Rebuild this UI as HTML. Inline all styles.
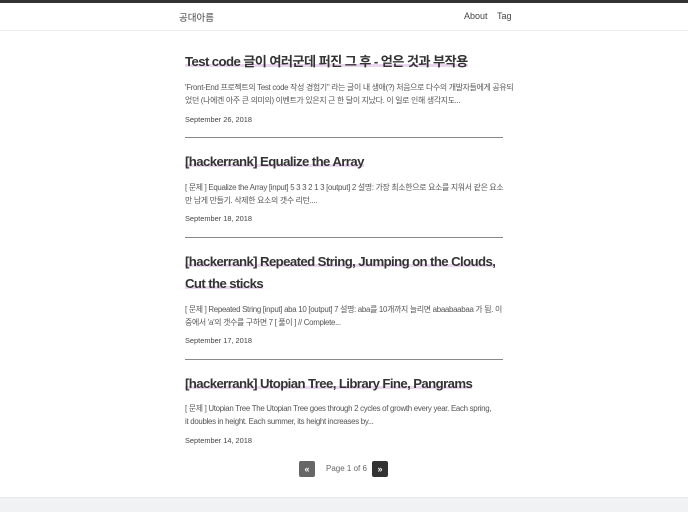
<!DOCTYPE html>
<html><head><meta charset="utf-8"><style>
*{margin:0;padding:0;box-sizing:border-box}
body{width:688px;height:512px;overflow:hidden;background:#fff;position:relative;font-family:"Liberation Sans","Noto Sans CJK KR",sans-serif;color:#333}
.top{position:absolute;left:0;top:0;width:688px;height:3px;background:#333}
.hdr{position:absolute;left:0;top:3px;width:688px;height:28px;border-bottom:1px solid #eee}
.a{position:absolute;font-size:9px;color:#444;top:11px}
.t{position:absolute;left:185px;font-size:13.2px;font-weight:bold;color:#333;letter-spacing:-0.6px;line-height:22px;white-space:nowrap}
.t span{background:linear-gradient(transparent 68%,#ead6ee 68%,#ead6ee 88%,transparent 88%)}
.e{position:absolute;left:185px;font-size:7.9px;line-height:13px;color:#555;letter-spacing:-0.3px;white-space:nowrap}
.d{position:absolute;left:185px;font-size:7.4px;color:#444}
.hr{position:absolute;left:185px;width:318px;height:1px;background:#888}
.btn{position:absolute;top:461px;width:16px;height:16px;border-radius:2px;color:#fff;font-size:9px;text-align:center;line-height:16px;font-weight:bold}
.ft{position:absolute;left:0;top:497px;width:688px;height:15px;background:#f1f2f3;border-top:1px solid #e8e8e8}
</style></head><body>
<div class="top"></div>
<div class="hdr"></div>
<div class="a" style="left:179px;font-size:9.5px;top:10px">공대아름</div>
<div class="a" style="left:464px">About</div>
<div class="a" style="left:497px">Tag</div>

<div class="t" style="top:51px"><span>Test code 글이 여러군데 퍼진 그 후 - 얻은 것과 부작용</span></div>
<div class="e" style="top:81px">'Front-End 프로젝트의 Test code 작성 경험기" 라는 글이 내 생애(?) 처음으로 다수의 개발자들에게 공유되<br>었던 (나에겐 아주 큰 의미의) 이벤트가 있은지 근 한 달이 지났다. 이 일로 인해 생각지도...</div>
<div class="d" style="top:115px">September 26, 2018</div>
<div class="hr" style="top:137px"></div>

<div class="t" style="top:151px"><span>[hackerrank] Equalize the Array</span></div>
<div class="e" style="top:181px">[ 문제 ] Equalize the Array [input] 5 3 3 2 1 3 [output] 2 설명: 가장 최소한으로 요소를 지워서 같은 요소<br>만 남게 만들기. 삭제한 요소의 갯수 리턴....</div>
<div class="d" style="top:214px">September 18, 2018</div>
<div class="hr" style="top:237px"></div>

<div class="t" style="top:251px"><span>[hackerrank] Repeated String, Jumping on the Clouds,</span><br><span>Cut the sticks</span></div>
<div class="e" style="top:303px">[ 문제 ] Repeated String [input] aba 10 [output] 7 설명: aba를 10개까지 늘리면 abaabaabaa 가 됨. 이<br>중에서 'a'의 갯수를 구하면 7 [ 풀이 ] // Complete...</div>
<div class="d" style="top:336px">September 17, 2018</div>
<div class="hr" style="top:359px"></div>

<div class="t" style="top:373px"><span>[hackerrank] Utopian Tree, Library Fine, Pangrams</span></div>
<div class="e" style="top:402px">[ 문제 ] Utopian Tree The Utopian Tree goes through 2 cycles of growth every year. Each spring,<br>it doubles in height. Each summer, its height increases by...</div>
<div class="d" style="top:436px">September 14, 2018</div>

<div class="btn" style="left:299px;background:#666">«</div>
<div style="position:absolute;left:326px;top:464px;font-size:8px;color:#666">Page 1 of 6</div>
<div class="btn" style="left:372px;background:#333">»</div>
<div class="ft"></div>
</body></html>
